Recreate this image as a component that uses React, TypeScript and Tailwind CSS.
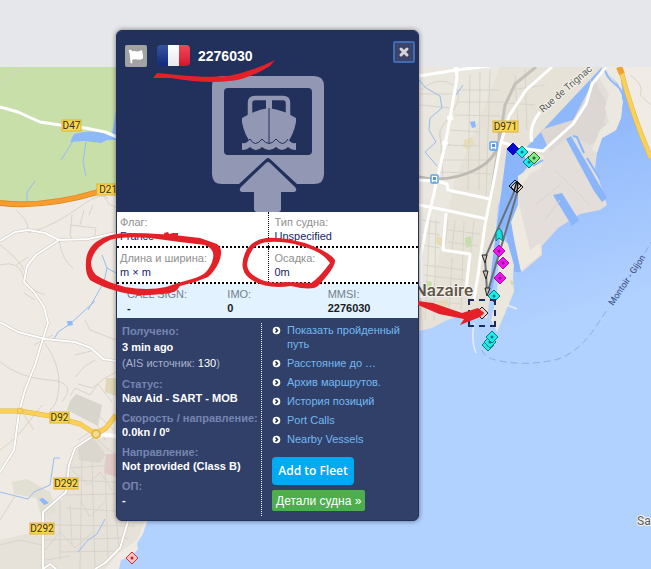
import React from 'react';
import { X } from 'lucide-react';
import { FaFlag } from 'react-icons/fa';

const tracks = [
    "M0 265 Q18 260 23 275 T45 295",
    "M16 210 Q28 220 28 230",
    "M28 233 Q45 228 56 222 T84 204 T108 198",
    "M72 215 L70 235 L74 242 M70 225 L96 228 L94 240",
    "M102 193 L109 204 L117 208 M93 205 L89 215 M84 210 L80 225",
    "M59 240 Q62 260 73 268 M0 245 Q20 260 24 270",
    "M0 362 Q20 378 49 380 T62 402",
    "M45 343 Q60 365 59 385 T50 410 M34 345 L53 335",
    "M0 450 Q15 440 28 423 L42 405 M22 412 L34 430",
    "M75 377 L85 366 L95 360 M78 384 L92 388 L105 378 L116 372",
    "M70 396 L75 388 L90 395 L98 384 L112 402",
    "M0 520 L15 496 M0 545 L20 540 L42 545 M46 560 L70 556",
    "M0 85 L10 75 L24 67",
    "M16 265 L28 257 M24 293 L35 300",
    "M85 320 L90 330 L116 340 M75 355 L95 350",
];

const townStreets = [
    "M70 468 L116 465 M72 480 L116 482 M66 495 L116 494 M66 508 L116 511 M45 525 L135 526 M44 540 L128 538 M60 552 L120 551",
    "M82 456 L80 569 M92 458 L95 569 M105 460 L108 560 M116 515 L119 550 M60 500 L60 560 M70 505 L72 545",
    "M72 470 L88 485 L100 472 L112 490 M80 500 L90 517 L105 502 M45 550 L60 532 L75 548 L93 532",
    "M95 420 L105 440 M78 440 L90 432 L105 447 L116 455 M98 415 L114 430",
];

const rightStreets = [
    "M420 94 L455 94 M420 105 L450 108 M440 130 L443 180 M450 130 L480 132 M445 145 L480 146 M443 160 L490 160 M440 172 L492 174",
    "M456 90 L500 90 M458 102 L503 102 M455 115 L500 116 M470 75 L468 190 M480 72 L479 190 M490 70 L486 200",
    "M510 90 L545 85 M505 103 L535 105 M515 75 L518 125 M525 70 L527 130",
    "M420 90 Q440 75 453 85 T448 118 T450 145",
    "M422 220 L440 223 M422 232 L440 235 M421 245 L440 248 M424 265 L465 270 M424 275 L464 280 M424 300 L460 304",
    "M430 215 L425 320 M436 220 L434 320 M448 220 L445 245 M455 220 L452 250 M464 222 L461 310 M474 220 L470 260",
    "M448 230 L480 234 M448 242 L478 246 M452 258 L449 312",
    "M590 80 L600 100 M630 75 Q645 85 640 95 L651 105",
    "M545 220 L560 200 M535 205 L560 185 M555 170 L590 205",
];

const lanes = [
    "M0 241 L15 232 L28 230 L45 233 L59 240 L88 239 L116 233",
    "M59 240 L36 255 L27 266 L24 282 L34 292 L44 307 L48 323 L41 345 L35 365 L25 390 L19 412 L14 450 L0 472",
    "M0 322 L18 332 L45 339 L75 342 L91 348 L103 359 L116 361",
    "M96 434 L75 448 L69 465 L66 492 L43 512 V569",
    "M128 521 L120 548 L105 563 L95 569 M43 569 L50 564 L56 569",
];

const mainRoads = [
    "M456 67 L457 78 L450 118 L445 145 L437 180 L426 228 L420 260",
    "M419 76 L456 70 L490 66",
    "M552 67 L526 90 L509 116 L501 142 L494 180 L485 225 L478 275 L474 300",
    "M501 142 L520 148 L543 151 L573 124 L586 104 L592 84 L606 67",
    "M419 180 L437 181 L447 184 L448 190 L490 199",
    "M419 205 L445 210 L487 219",
    "M532 142 Q528 128 540 112",
    "M446 213 L443 250 L470 254 L466 290",
    "M421 258 L421 298",
];

const highway = "M0 411 H20 L50 416 L80 424 L96 434 L106 428 L116 415 M620 67 Q632 115 651 158";

interface SignProps {
    x: number;
    y: number;
    width: number;
    label: string;
}

function RoadSign({ x, y, width, label }: SignProps) {
    return (
        <g>
            <rect x={x} y={y} width={width} height="11" fill="#fcd751" stroke="#dfb238" />
            <text x={x + width / 2} y={y + 9} textAnchor="middle" fontSize="10" fill="#33301f">{label}</text>
        </g>
    );
}

interface MarkerProps {
    x: number;
    y: number;
    fill: string;
    stroke?: string;
    dot?: string;
}

function Marker({ x, y, fill, stroke = "#16756f", dot }: MarkerProps) {
    return (
        <g transform={`translate(${x} ${y})`}>
            <path d="M0 -6 L6 0 L0 6 L-6 0 Z" fill={fill} stroke={stroke} />
            {dot && <circle r="1.5" fill={dot} />}
        </g>
    );
}

function StationIcon({ x, y }: { x: number; y: number }) {
    return (
        <g transform={`translate(${x} ${y})`}>
            <rect width="7" height="8" rx="1" fill="#fff" stroke="#5ea2e6" strokeWidth="1.5" />
            <rect x="2" y="2" width="3" height="3" fill="#4e95df" />
            <path d="M2 7 H5" stroke="#4e95df" />
        </g>
    );
}

function HarbourMap() {
    return (
        <svg
            viewBox="0 67 651 502"
            preserveAspectRatio="xMinYMin slice"
            className="absolute inset-0 h-full w-full font-['Roboto',sans-serif]"
            role="img"
            aria-label="Map"
        >
            <defs>
                <linearGradient id="sea" gradientUnits="userSpaceOnUse" x1="570" y1="120" x2="620" y2="300">
                    <stop offset="0" stopColor="#8fb8fb" />
                    <stop offset="0.5" stopColor="#a0c4fd" />
                    <stop offset="1" stopColor="#b1d1ff" />
                </linearGradient>
            </defs>
            <rect y="67" width="651" height="502" fill="#b1d1ff" />
            <rect x="500" y="67" width="151" height="502" fill="url(#sea)" />

            {/* Land */}
            <path d="M0 67 H419 V500 H147 V521 L143 534 L137 543 L138 549 L132 556 L121 560 L119 569 H0 Z" fill="#efebe4" />
            <path d="M419 67 H602 L522 152 L498 205 L492 280 L487 319 L480 314 L467 313 L445 321 L432 328 L419 331 Z" fill="#e7e2d8" />
            <path d="M419 67 H500 L455 180 L432 290 L419 310 Z" fill="#eae7df" />
            <path d="M66 465 L80 443 L116 435 V519 H146 L137 540 L120 552 L105 569 H0 V540 L42 530 V505 L62 500 Z" fill="#e6e2d9" />
            <path d="M12 482 L27 479 L50 492 L57 512 L42 518 L36 498 L14 494 Z" fill="#e2dfd3" />
            <path d="M70 401 L76 394 L102 405 L98 426 L67 410 Z" fill="#d8d5cd" />
            <path d="M78 449 L92 436 L106 455 L100 463 L79 460 Z" fill="#dbd7ce" />
            <path d="M106 378 H116 V396 L105 392 Z" fill="#e1d8b7" />
            <path d="M106 454 H116 V477 L104 473 Z" fill="#e3c9c6" />
            <path d="M0 67 H116 V190 L100 194 L60 202 L30 204 L0 203 Z" fill="#c9dfaa" />

            {/* Port */}
            <path d="M505 150 L520 148 L543 151 L580 118 L590 90 L603 67 L616 83 L623 98 L621 118 L616 130 L602 138 L597 153 L595 168 L607 205 L600 210 L580 214 L558 228 L542 246 L542 255 L522 272 L518 268 L511 222 L516 195 L526 165 Z" fill="#e3ded9" />
            <path d="M540 130 L573 120 L594 80 L608 105 L604 122 L610 130 L600 139 L590 145 L570 135 L550 152 Z" fill="#dcd7d3" />
            <path d="M602 67 L616 83 L623 98 L621 118 L616 130 L602 138 L597 153 L592 150 L600 130 L609 122 L605 108 L609 94 L600 80 Z" fill="#ebe8e0" />
            <path d="M518 200 L511 222 L521 271 L541 254 L540 243 L530 250 Z" fill="#eeeae0" />
            <path d="M602 67 L618 84 L623 100 L620 67 Z" fill="#edeae1" />
            <path d="M622 67 H651 V155 L640 130 L628 98 Z" fill="#f0ece5" />
            <path d="M604 67 Q606 77 615 84 T623 100" fill="none" stroke="#8fb8fb" strokeWidth="2" />

            {/* Basins */}
            <path d="M507 148 L524 155 L528 166 L521 175 L518 190 L518 205 L511 222 L514 240 L521 272 L514 272 L508 245 L504 225 L491 297 L488 297 L497 225 Z" fill="#8ab5fb" />
            <path d="M500 236 L508 244 L514 265 L513 278 L514 292 L497 332 L491 320 L497 295 Z" fill="#ebe7dc" />
            <path d="M530 168 L537 154 L544 156 L541 168 L530 174 L524 182 L518 190 L518 176 Z" fill="#ece8dd" />
            <path d="M566 139 L571 136 L607 198 L602 202 L594 191 Z M553 195 L562 193 L579 220 L572 226 Z" fill="#8ab5fb" />
            <path d="M573 136 L577 137 L584 153 M587 158 L600 179" fill="none" stroke="#8ab5fb" strokeWidth="2" />
            <path d="M533 166 L543 160" stroke="#8ab5fb" strokeWidth="2" />
            <path d="M474 323 Q471 342 476 353 M507 305 L517 309" fill="none" stroke="#e9edf2" strokeWidth="1.5" />

            {/* Parks */}
            <path d="M464 140 L472 137 L474 144 L469 150 L463 147 Z M437 236 L445 239 L442 247 L436 243 Z M437 302 L447 299 L450 305 L440 310 Z" fill="#e6dcb5" />
            <path d="M465 238 L471 236 L472 246 L466 248 Z M426 281 L432 282 L431 290 L426 288 Z M510 280 L514 282 L512 286 Z" fill="#c5dfa6" />

            {/* Streets */}
            <g fill="none" stroke="#d8d4cb">
                {tracks.map((d) => <path key={d} d={d} />)}
                {townStreets.map((d) => <path key={d} d={d} />)}
                {rightStreets.map((d) => <path key={d} d={d} />)}
            </g>

            {/* Streams and ponds */}
            <path d="M70 142 L74 134 L84 132 L105 131 L112 134 L116 110 V140 L107 140 L101 143 L84 141 Z M67 321 l5 0 l1 4 l-5 1 Z M39 499 l4 -1 l6 5 l-5 2 Z M470 122 l5 -1 l1 6 l-4 1 Z" fill="#8db8f9" />
            <path d="M73 141 L61 160 M86 142 L83 162 L86 176 M27 204 V192 L35 181 M54 339 L58 332 L70 324 L95 301 M102 255 L107 268 L116 273 M107 268 L104 282 L88 310 M60 458 H54 L50 485 L34 492 L28 499 L0 492 M105 519 L97 534 L88 540 L78 552 M419 80 L426 88 L440 96 L442 108 L430 118 L429 130 L436 142 L425 152 L437 166 M456 95 L463 85" fill="none" stroke="#96bcf1" />

            {/* Rail */}
            <path d="M536 67 L515 84 L505 105 L498 150 L491 195" fill="none" stroke="#c4c1bb" strokeWidth="3" />
            <path d="M419 177 Q448 183 475 170 T499 130" fill="none" stroke="#bdbab4" strokeWidth="3" />

            {/* Roads */}
            <g fill="none" strokeLinejoin="round">
                <path d="M0 107 L18 112 L40 122 L60 125 L85 128 L105 132 L117 137" stroke="#fff" strokeWidth="3" />
                <g stroke="#c9c5bc" strokeWidth="3">
                    {lanes.map((d) => <path key={d} d={d} />)}
                </g>
                <g stroke="#fff" strokeWidth="2">
                    {lanes.map((d) => <path key={d} d={d} />)}
                </g>
                <path d="M96 434 L116 436" stroke="#fff" strokeWidth="4" />
                <g stroke="#fff" strokeWidth="3">
                    {mainRoads.map((d) => <path key={d} d={d} />)}
                </g>
                <path d="M0 203 Q45 208 98 192" stroke="#db8b27" strokeWidth="6" />
                <path d="M0 203 Q45 208 98 192" stroke="#f79c2e" strokeWidth="4" />
                <path d={highway} stroke="#dfb54a" strokeWidth="5" />
                <path d={highway} stroke="#fbd058" strokeWidth="4" />
                <path d="M619 67 L622 74" stroke="#f0a22e" strokeWidth="6" />
            </g>
            <circle cx="96" cy="434" r="4" fill="#f3dd9c" stroke="#e6b93f" strokeWidth="2" />
            <circle cx="20" cy="411" r="3" fill="#fbd058" stroke="#e3bb58" />
            <g fill="#fff">
                <circle cx="456" cy="70" r="3" />
                <circle cx="450" cy="118" r="3" />
                <circle cx="445" cy="143" r="3" />
            </g>

            <RoadSign x={62} y={120} width={19} label="D47" />
            <RoadSign x={97} y={184} width={28} label="D213" />
            <RoadSign x={50} y={412} width={19} label="D92" />
            <RoadSign x={54} y={478} width={24} label="D292" />
            <RoadSign x={30} y={523} width={24} label="D292" />
            <RoadSign x={493} y={121} width={25} label="D971" />
            <StationIcon x={490} y={142} />
            <StationIcon x={431} y={175} />

            {/* Ferry line */}
            <path d="M482 350 Q484 358 500 361 Q525 366 555 360 Q577 354 595 328 L607 310 M645 253 L651 242" fill="none" stroke="#91aed8" strokeDasharray="7 4" />

            <g fill="#5b5b58" stroke="#f5f3ed" strokeWidth="2" paintOrder="stroke">
                <text x="473" y="296" textAnchor="end" fontSize="17" fontWeight="500" fill="#5e5648">Saint-Nazaire</text>
                <text x="637" y="525" fontSize="12">Sa</text>
                <text transform="translate(543 113) rotate(-41)" fontSize="10">Rue de Trignac</text>
            </g>
            <text transform="translate(613 306) rotate(-56)" fontSize="9" fill="#33477b">Montoir - Gijon</text>

            {/* Vessel tracks */}
            <path d="M515 190 L485 258 L487 291 M518 190 L488 291" fill="none" stroke="#69717b" strokeWidth="2" />
            <path d="M482 255 H487 L485 263 Z M483 271 H488 L486 279 Z M485 288 H490 L487 296 Z" fill="#c4bfb2" stroke="#222" />
            <path d="M499 228 L502 232 L503 241 L499 238 L496 241 L496 232 Z" fill="#17dfe2" stroke="#16756f" />

            <Marker x={513} y={149} fill="#0808cf" stroke="#0808cf" />
            <Marker x={522} y={152} fill="#18eef0" dot="#16756f" />
            <Marker x={529} y={162} fill="#18eef0" dot="#16756f" />
            <Marker x={534} y={158} fill="#82ed83" stroke="#28662e" dot="#28662e" />
            <Marker x={517} y={187} fill="#d9d5cc" stroke="#171717" />
            <Marker x={515} y={186} fill="none" stroke="#171717" />
            <path d="M517 181 L514 191 M518 182 L517 192" stroke="#171717" strokeWidth="1.5" />
            <Marker x={499} y={251} fill="#ef14ec" stroke="#a411a5" dot="#91118f" />
            <Marker x={503} y={263} fill="#ef14ec" stroke="#a411a5" dot="#91118f" />
            <Marker x={500} y={278} fill="#ef14ec" stroke="#a411a5" dot="#91118f" />
            <Marker x={494} y={296} fill="#18eef0" dot="#16756f" />
            <Marker x={482} y={313} fill="#f7c9c4" stroke="#222" dot="#a21616" />
            <Marker x={488} y={345} fill="#18eef0" dot="#16756f" />
            <Marker x={490} y={342} fill="#18eef0" dot="#16756f" />
            <Marker x={492} y={337} fill="#18eef0" dot="#16756f" />
            <Marker x={132} y={558} fill="#fbc3c3" stroke="#d83030" dot="#c91c1c" />
            <path d="M469 305 V300 H474 M479 300 H485 M490 300 H495 V305 M495 310 V316 M495 321 V326 H490 M485 326 H479 M474 326 H469 V321 M469 316 V310" fill="none" stroke="#1e2c5c" strokeWidth="2" />
        </svg>
    );
}

function ShipIcon() {
    return (
        <svg viewBox="0 0 112 136" className="mx-auto block h-[136px] w-[112px]" aria-hidden="true">
            <path fillRule="evenodd" d="M10 0 H102 Q112 0 112 10 V98 Q112 108 102 108 H85 L58 83 Q56 81 54 83 L27 108 H10 Q0 108 0 98 V10 Q0 0 10 0 Z M16 12 Q12 12 12 16 V75 Q12 79 16 79 H96 Q100 79 100 75 V16 Q100 12 96 12 Z" fill="#9298b4" />
            <path d="M54 87 Q56 85 58 87 L83 111 Q86 115 82 116 H69 V133 Q69 136 66 136 H45 Q42 136 42 133 V116 H30 Q26 115 29 111 Z" fill="#9298b4" />
            <path d="M38 41 V27 Q38 22 43 22 H71 Q76 22 76 27 V41" fill="none" stroke="#9298b4" strokeWidth="4.5" />
            <path d="M54 22 H60 V34 H54 Z" fill="#9298b4" />
            <path d="M57 32 Q71 34 84 42 V46 Q82 58 74 69 H40 Q32 58 30 46 V42 Q43 34 57 32 Z" fill="#9298b4" />
            <path d="M30 67 Q35 68 38 63 Q43 72 50 63 Q57 72 64 63 Q71 72 76 63 Q79 68 84 67 V74 Q79 74 76 71 Q70 77 64 71 Q57 77 50 71 Q44 77 38 71 Q35 74 30 74 Z" fill="#9298b4" />
            <path d="M37 64 L38 63 Q43 72 50 63 Q57 72 64 63 Q71 72 76 63 M57 32 V67" fill="none" stroke="#22305c" />
        </svg>
    );
}

function FrenchFlag() {
    return (
        <span className="flex h-[21px] w-[33px] overflow-hidden rounded-sm">
            <span className="flex-1 bg-linear-to-b from-[#36539f] to-[#12297c]" />
            <span className="flex-1 bg-linear-to-b from-white to-[#e8e8eb]" />
            <span className="flex-1 bg-linear-to-b from-[#ef4659] to-[#d7102b]" />
        </span>
    );
}

const facts = [
    { label: "Флаг:", value: "France" },
    { label: "Тип судна:", value: "Unspecified" },
    { label: "Длина и ширина:", value: "m × m" },
    { label: "Осадка:", value: "0m" },
];

const ids = [
    { label: "CALL SIGN:", value: "-" },
    { label: "IMO:", value: "0" },
    { label: "MMSI:", value: "2276030" },
];

const statuses = [
    { label: "Статус:", value: "Nav Aid - SART - MOB" },
    { label: "Скорость / направление:", value: "0.0kn / 0º" },
    { label: "Направление:", value: "Not provided (Class B)" },
    { label: "ОП:", value: "-" },
];

const links = [
    "Показать пройденный путь",
    "Расстояние до …",
    "Архив маршрутов.",
    "История позиций",
    "Port Calls",
    "Nearby Vessels",
];

function VesselPopup() {
    return (
        <section className="absolute left-[116px] top-[30px] w-[303px] rounded-md border border-[#22305c] bg-[#314069] text-[11px] leading-[14px] shadow-[0_0_5px_rgba(0,0,0,0.5)]">
            {/* Header */}
            <div className="rounded-t-md bg-[#22305c]">
                <header className="flex h-[45px] items-center pl-2 pr-[3px] pt-1">
                    <button aria-label="Flag" className="flex h-[22px] w-[22px] items-center justify-center rounded-xs bg-[#a3a3a3] text-white">
                        <FaFlag className="h-[14px] w-[14px] -rotate-6" />
                    </button>
                    <div className="ml-[10px] mr-2">
                        <FrenchFlag />
                    </div>
                    <h1 className="text-sm font-bold text-white">2276030</h1>
                    <button aria-label="Close" className="mb-2 ml-auto flex h-[22px] w-[22px] items-center justify-center rounded-xs border-2 border-[#426bb5] bg-[#3b4569] text-[#d5d5d8]">
                        <X className="h-3 w-3" strokeWidth={6} />
                    </button>
                </header>
                <ShipIcon />
            </div>

            {/* Facts */}
            <dl className="grid grid-cols-2 bg-white">
                {facts.map((fact) => (
                    <div key={fact.label} className="h-9 border-b-2 border-dotted border-b-black pl-[3px] pt-[3px] even:border-l even:border-l-black even:pl-[6px]">
                        <dt className="text-[#8f8f8f]">{fact.label}</dt>
                        <dd className="text-[#201c68]">{fact.value}</dd>
                    </div>
                ))}
            </dl>
            <dl className="grid grid-cols-3 bg-[#e2f3ff] pb-[3px] pt-[3px]">
                {ids.map((id) => (
                    <div key={id.label} className="pl-[10px]">
                        <dt className="text-[#777e89]">{id.label}</dt>
                        <dd className="font-bold text-[#1b1b22]">{id.value}</dd>
                    </div>
                ))}
            </dl>

            {/* Details */}
            <div className="flex pb-1 pt-[5px]">
                <dl className="flex w-[145px] flex-col gap-[6px] whitespace-nowrap border-r border-dotted border-white pl-[5px] font-bold text-white">
                    <div className="leading-[16px]">
                        <dt className="text-[#7685b0]">Получено:</dt>
                        <dd>3 min ago</dd>
                        <dd className="font-normal text-[#a5b0cd]">(AIS источник: <span className="text-white">130</span>)</dd>
                    </div>
                    {statuses.map((status) => (
                        <div key={status.label}>
                            <dt className="text-[#7685b0]">{status.label}</dt>
                            <dd>{status.value}</dd>
                        </div>
                    ))}
                </dl>
                <div className="flex-1 pb-[5px] pl-[10px]">
                    <ul className="flex flex-col gap-[5px]">
                        {links.map((link) => (
                            <li key={link} className="flex gap-[6px]">
                                <svg viewBox="0 0 9 9" className="mt-[3px] h-[9px] w-[9px] shrink-0" aria-hidden="true">
                                    <circle cx="4.5" cy="4.5" r="3.8" fill="#fff" />
                                    <path d="M3.5 2.5 L5.5 4.5 L3.5 6.5" fill="none" stroke="#1b2545" strokeWidth="1.5" />
                                </svg>
                                <a href="#" className="w-[125px] text-[#72b9f2]">{link}</a>
                            </li>
                        ))}
                    </ul>
                    <button className="mt-[11px] block h-7 w-[82px] rounded-sm bg-[#00aaf0] font-['Open_Sans',sans-serif] text-xs font-semibold text-white">
                        Add to Fleet
                    </button>
                    <button className="mt-[5px] block h-[21px] whitespace-nowrap rounded-xs bg-[#4cae4c] px-1 text-xs text-white">
                        Детали судна »
                    </button>
                </div>
            </div>
        </section>
    );
}

function PenMarks() {
    return (
        <svg
            viewBox="0 0 651 569"
            preserveAspectRatio="xMinYMin slice"
            className="pointer-events-none absolute inset-0 h-full w-full"
            aria-hidden="true"
        >
            <g fill="#e42028">
                <path d="M153 78 L157 73 L178 75 Q207 78 228 76 Q253 71 275 60 L270 66 Q247 80 230 81 Q205 84 171 78 Z" />
                <path fillRule="evenodd" d="M86 262 Q86 250 96 242 Q108 233 130 233 Q160 233 200 238 L217 244 Q224 249 219 262 Q215 271 208 277 L195 282 L180 286 Q176 294 162 294 Q138 297 120 292 Q101 287 90 280 Q85 274 86 262 Z M91 262 Q91 270 96 275 Q106 282 125 287 Q148 291 166 287 L178 283 L192 279 Q202 276 206 272 Q212 265 213 258 Q215 249 205 245 L180 242 L150 238 Q122 236 110 240 Q94 247 91 262 Z" />
                <path d="M164 233 L168 232 L169 234 L173 233 L178 233 V239 L165 238 Z" />
                <path fillRule="evenodd" d="M266 238 Q282 237 305 243 Q330 252 335 260 Q336 267 318 286 Q312 291 291 286 Q264 290 249 278 Q237 268 247 249 Q253 240 266 238 Z M269 242 Q254 243 250 254 Q243 268 253 275 Q266 285 285 282 L311 283 Q319 278 330 263 Q322 251 301 246 Q285 241 269 242 Z" />
                <path d="M418 301 L433 303 L462 313 L478 308 L484 313 L480 317 L460 325 L464 319 L439 314 L418 305 Z" />
            </g>
        </svg>
    );
}

export default function App() {
    return (
        <main className="relative flex min-h-screen flex-col overflow-hidden bg-[#e5e7ea] font-['Liberation_Sans',Arial,sans-serif]">
            <div className="h-[67px] shrink-0" />
            <div className="relative flex-1">
                <HarbourMap />
            </div>
            <VesselPopup />
            <PenMarks />
        </main>
    );
}
